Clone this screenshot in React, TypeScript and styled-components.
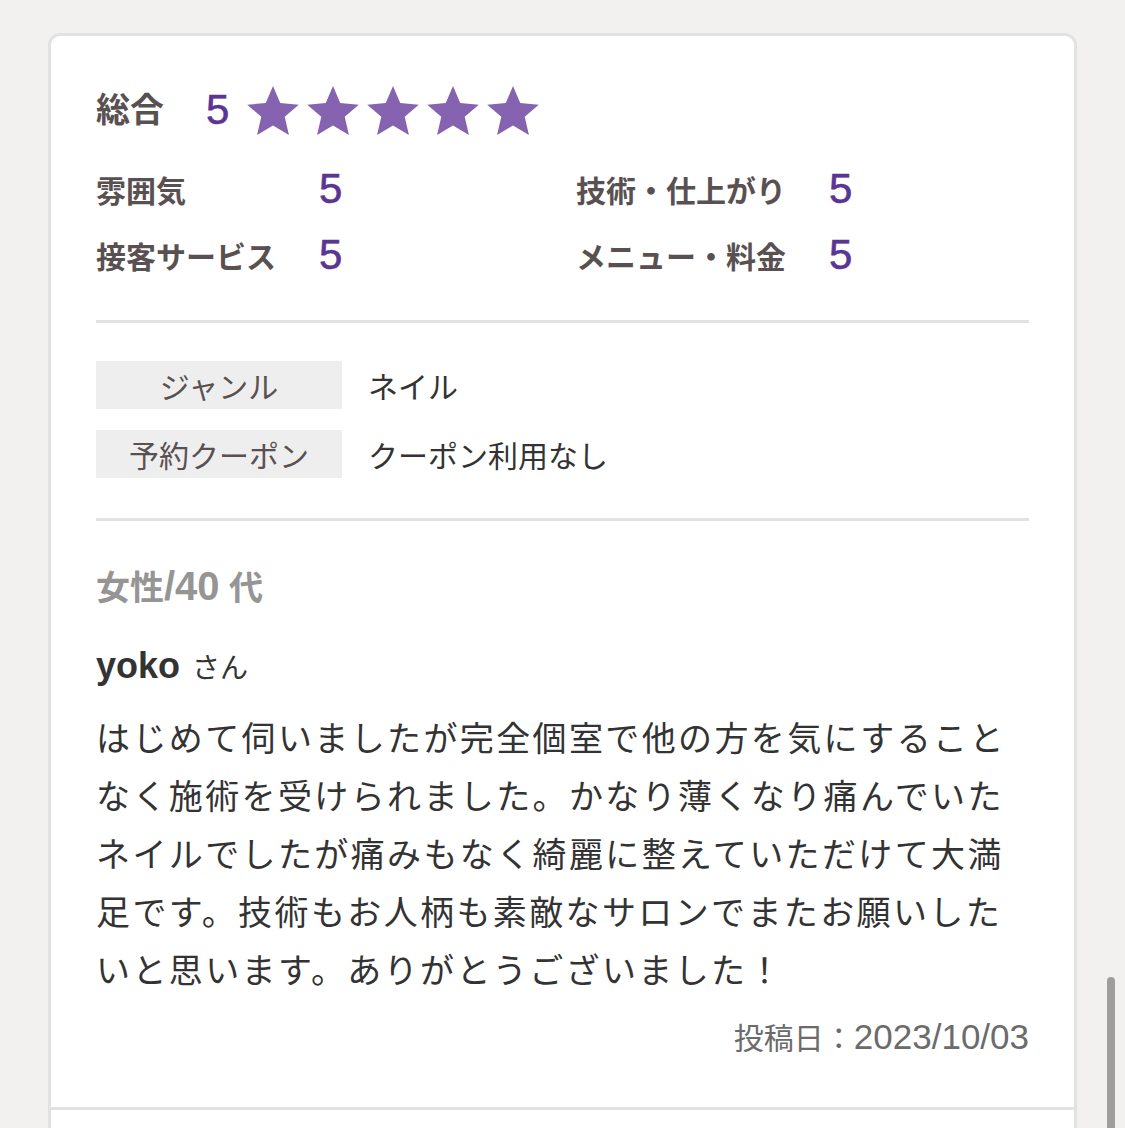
import React from 'react';
import styled, { createGlobalStyle } from 'styled-components';

const GlobalStyle = createGlobalStyle`
  html, body {
    margin: 0;
    padding: 0;
    background: #f2f1ef;
    overflow: hidden;
  }
  body {
    font-family: "Liberation Sans", "Noto Sans CJK JP", sans-serif;
  }
`;

const Page = styled.div`
  padding: 33px 48px 0;
`;

const Card = styled.div`
  background: #fff;
  border: 3px solid #e2e2e2;
  border-radius: 12px;
  overflow: hidden;
`;

const Review = styled.article`
  padding: 44px 45px 46px;
  border-bottom: 3px solid #e2e2e2;
`;

const TotalRow = styled.div`
  display: flex;
  align-items: center;
  height: 60px;
`;

const TotalLabel = styled.span`
  width: 110px;
  font-size: 34px;
  font-weight: 700;
  color: #595151;
  line-height: 1;
`;

const Score = styled.span`
  font-size: 42px;
  line-height: 1;
  color: #5b3593;
  -webkit-text-stroke: 0.6px #5b3593;
`;

const Stars = styled.div`
  display: flex;
  gap: 8px;
  margin-left: 18px;
`;

const SubGrid = styled.div`
  display: grid;
  grid-template-columns: 223px 257px 253px 1fr;
  grid-auto-rows: 66px;
  align-items: center;
  margin-top: 16px;
`;

const SubLabel = styled.span`
  font-size: 30px;
  font-weight: 700;
  color: #595151;
  white-space: nowrap;
`;

const Divider = styled.hr<{ $top: number }>`
  border: 0;
  height: 3px;
  background: #e2e2e2;
  margin: ${p => p.$top}px 0 0;
`;

const InfoTable = styled.div`
  display: grid;
  grid-template-columns: 246px 1fr;
  column-gap: 26px;
  row-gap: 21px;
  margin-top: 38px;
`;

const InfoLabel = styled.div`
  height: 48px;
  display: flex;
  align-items: center;
  justify-content: center;
  background: #eeeeee;
  font-size: 30px;
  color: #595151;
`;

const InfoValue = styled.div`
  display: flex;
  align-items: center;
  font-size: 30px;
  color: #333;
`;

const Attr = styled.div`
  margin-top: 41px;
  font-size: 34px;
  font-weight: 700;
  line-height: 48px;
  color: #959595;
`;

const Latin = styled.span<{ $size: number }>`
  font-size: ${p => p.$size}px;
`;

const Name = styled.div`
  margin-top: 30px;
  font-size: 36px;
  font-weight: 700;
  line-height: 48px;
  color: #333;
`;

const Honorific = styled.span`
  margin-left: 12px;
  font-size: 28px;
  font-weight: 400;
`;

const Body = styled.p`
  margin: 17px 0 0;
  font-size: 34px;
  letter-spacing: 0.07em;
  line-height: 58px;
  color: #333;
`;

const PostDate = styled.div`
  margin-top: 15px;
  text-align: right;
  font-size: 30px;
  line-height: 44px;
  color: #6b6b6b;
`;

const NextItem = styled.div`
  height: 80px;
`;

const ScrollThumb = styled.div`
  position: fixed;
  right: 10px;
  top: 977px;
  width: 8px;
  height: 220px;
  border-radius: 4px;
  background: #a09e9c;
`;

const Star = () => (
  <svg width="52" height="49" viewBox="2 2 20 19">
    <path
      fill="#8563b0"
      d="M12 17.27L18.18 21l-1.64-7.03L22 9.24l-7.19-.61L12 2 9.19 8.63 2 9.24l5.46 4.73L5.82 21z"
    />
  </svg>
);

const subRatings = [
  { label: '雰囲気', score: 5 },
  { label: '技術・仕上がり', score: 5 },
  { label: '接客サービス', score: 5 },
  { label: 'メニュー・料金', score: 5 },
];

const App = () => {
  return (
    <Page>
      <GlobalStyle />
      <Card>
        <Review>
          <TotalRow>
            <TotalLabel>総合</TotalLabel>
            <Score>5</Score>
            <Stars>
              {[0, 1, 2, 3, 4].map(i => <Star key={i} />)}
            </Stars>
          </TotalRow>

          <SubGrid>
            {subRatings.map(r => (
              <React.Fragment key={r.label}>
                <SubLabel>{r.label}</SubLabel>
                <Score>{r.score}</Score>
              </React.Fragment>
            ))}
          </SubGrid>

          <Divider $top={32} />

          <InfoTable>
            <InfoLabel>ジャンル</InfoLabel>
            <InfoValue>ネイル</InfoValue>
            <InfoLabel>予約クーポン</InfoLabel>
            <InfoValue>クーポン利用なし</InfoValue>
          </InfoTable>

          <Divider $top={40} />

          <Attr>
            女性<Latin $size={40}>/40</Latin> 代
          </Attr>
          <Name>
            yoko<Honorific>さん</Honorific>
          </Name>
          <Body>
            はじめて伺いましたが完全個室で他の方を気にすることなく施術を受けられました。かなり薄くなり痛んでいたネイルでしたが痛みもなく綺麗に整えていただけて大満足です。技術もお人柄も素敵なサロンでまたお願いしたいと思います。ありがとうございました！
          </Body>
          <PostDate>
            投稿日：<Latin $size={35}>2023/10/03</Latin>
          </PostDate>
        </Review>
        <NextItem />
      </Card>
      <ScrollThumb />
    </Page>
  );
};

export default App;
